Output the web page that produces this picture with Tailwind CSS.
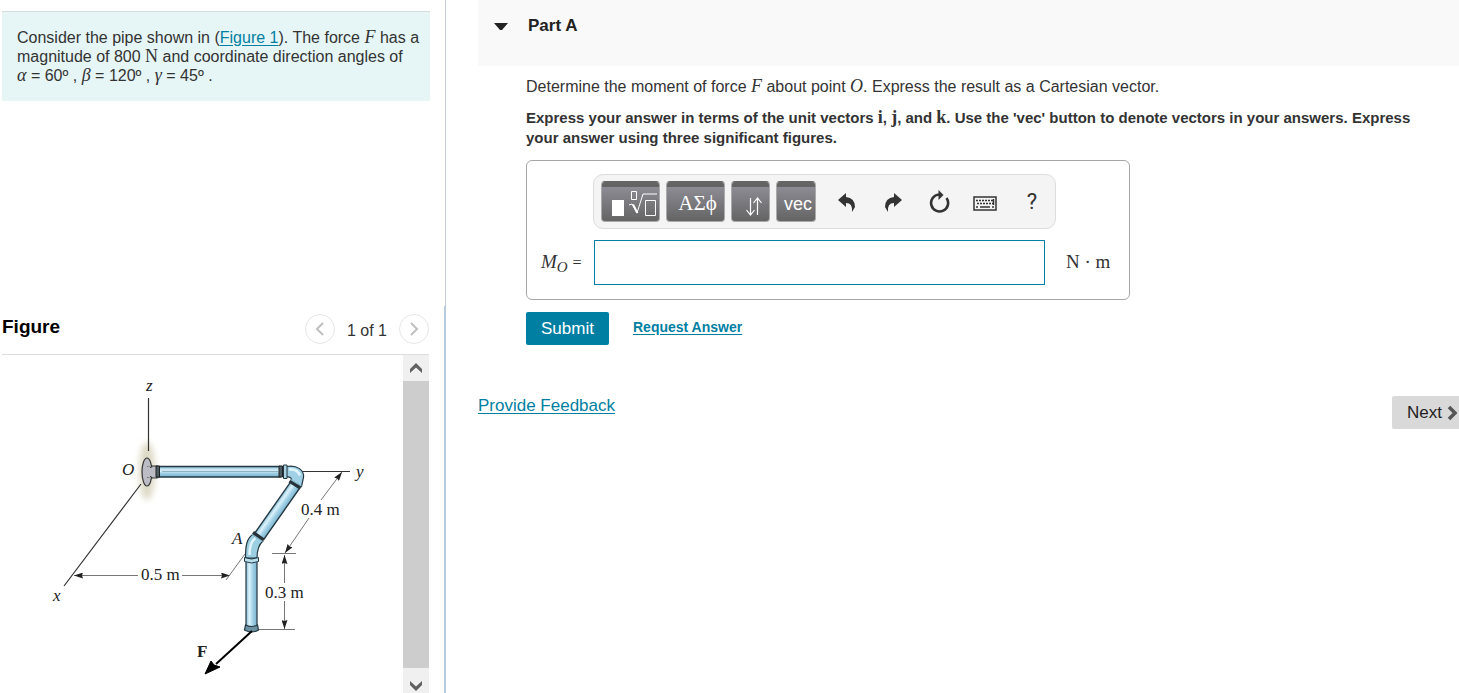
<!DOCTYPE html>
<html lang="en">
  <head>
    <meta charset="UTF-8" />
    <meta name="viewport" content="width=device-width, initial-scale=1.0" />
    <title>Moment of a Force</title>
    <script src="https://cdn.jsdelivr.net/npm/@tailwindcss/browser@4"></script>
  </head>
  <body class="bg-white font-['Liberation_Sans',Arial,sans-serif] text-[#333]">
    <div class="flex h-screen overflow-hidden">
      <!-- Problem statement and figure -->
      <aside class="flex w-[446px] shrink-0 flex-col">
        <div class="h-[306px] shrink-0 border-r border-[#c3ccd6] pt-[11px] pr-[15px] pl-[2px]">
          <div class="border-t border-[#d5dedd] bg-[#e6f6f6] py-4 pl-[15px] text-[16px] leading-[19px]">
            <p>
              Consider the pipe shown in (<a href="#figure" class="text-[#007fa3] underline underline-offset-2">Figure 1</a>). The force
              <i class="font-['Liberation_Serif',serif] text-[18px] leading-4">F</i> has a magnitude of 800
              <span class="font-['Liberation_Serif',serif] text-[18px] leading-4">N</span> and coordinate direction angles of<br />
              <i class="font-['Liberation_Serif',serif] text-[18px] leading-4">α</i> = 60º ,
              <i class="font-['Liberation_Serif',serif] text-[18px] leading-4">β</i> = 120º ,
              <i class="font-['Liberation_Serif',serif] text-[18px] leading-4">γ</i> = 45º .
            </p>
          </div>
        </div>

        <section id="figure" class="flex min-h-0 flex-1 flex-col border-r-2 border-[#b8cce0] pr-[15px] pl-[2px]">
          <div class="flex h-[49px] shrink-0 items-center justify-between border-b border-[#ddd]">
            <h2 class="pb-[6px] text-[19px] font-bold text-black">Figure</h2>
            <div class="flex items-center gap-3 pb-[2px]">
              <button aria-label="Previous figure" class="flex size-[30px] items-center justify-center rounded-full border border-[#e6e6e6]">
                <svg class="h-[14px] w-[10px]" viewBox="0 0 10 14" fill="none" stroke="#bfbfbf" stroke-width="2"><path d="M8 1 2 7l6 6" /></svg>
              </button>
              <span class="pt-1 text-[16px]">1 of 1</span>
              <button aria-label="Next figure" class="flex size-[30px] items-center justify-center rounded-full border border-[#e6e6e6]">
                <svg class="h-[14px] w-[10px]" viewBox="0 0 10 14" fill="none" stroke="#bfbfbf" stroke-width="2"><path d="m2 1 6 6-6 6" /></svg>
              </button>
            </div>
          </div>

          <div class="flex min-h-0 flex-1">
            <div class="min-w-0 flex-1 overflow-hidden">
              <svg class="h-[338px] w-[401px]" viewBox="2 355 401 338" font-family="Liberation Serif, serif" font-size="17" fill="#222">
                <defs>
                  <linearGradient id="pipeH" x1="0" y1="0" x2="0" y2="1">
                    <stop offset="0" stop-color="#7fb8d4" />
                    <stop offset=".25" stop-color="#c4e4f2" />
                    <stop offset=".45" stop-color="#d9eff8" />
                    <stop offset=".65" stop-color="#9dcfe5" />
                    <stop offset="1" stop-color="#7ab3ce" />
                  </linearGradient>
                  <linearGradient id="pipeV" x1="0" y1="0" x2="1" y2="0">
                    <stop offset="0" stop-color="#84bcd6" />
                    <stop offset=".3" stop-color="#dcf2fa" />
                    <stop offset=".6" stop-color="#a4d3e8" />
                    <stop offset="1" stop-color="#7ab3ce" />
                  </linearGradient>
                  <filter id="soft" x="-50%" y="-20%" width="200%" height="140%"><feGaussianBlur stdDeviation="3" /></filter>
                  <marker id="arrow" viewBox="0 0 9 6" refX="9" refY="3" markerWidth="9" markerHeight="6" markerUnits="userSpaceOnUse" orient="auto-start-reverse">
                    <path d="M0 0 9 3 0 6 1 3z" fill="#222" />
                  </marker>
                </defs>

                <!-- axes -->
                <ellipse cx="147" cy="471" rx="8" ry="29" fill="#dcd9c4" filter="url(#soft)" />
                <g stroke="#333" stroke-width="1.2">
                  <path d="M148.500 398v53M141 484 64 586M298 471.500h52" />
                </g>

                <!-- dimensions -->
                <g stroke="#777" stroke-width="1" fill="none">
                  <path d="M138 575.500H74" marker-end="url(#arrow)" />
                  <path d="M182 575.500h48" marker-end="url(#arrow)" />
                  <path d="m245 554-19 26M272 553.500h24M259 629.500h36" />
                  <path d="m321 500 21-28" marker-end="url(#arrow)" />
                  <path d="m309 518-24 35" marker-end="url(#arrow)" />
                  <path d="M284.500 583v-28" marker-end="url(#arrow)" />
                  <path d="M284.500 601v28" marker-end="url(#arrow)" />
                </g>

                <!-- wall flange -->
                <g stroke="#333" stroke-width="1.200" fill="#bcbcc4">
                  <ellipse cx="147" cy="472" rx="5" ry="14" />
                  <path d="M147 467q5 1 5-1h5v12h-5q0-2-5-1" />
                </g>
                <path d="M146 467v10h4v-10z" fill="#bcbcc4" />

                <!-- pipe from the elbow to A -->
                <path transform="rotate(35 277 511)" d="M271.500 479h11v63h-11z" fill="url(#pipeV)" stroke="#243842" stroke-width="1.400" />

                <!-- pipe along y -->
                <path d="M157 466.500h123v10.500H157z" fill="url(#pipeH)" stroke="#243842" stroke-width="1.400" />
                <path d="M162 471.500h116" stroke="#6d96a8" stroke-width=".7" />
                <path d="M156 466h3.500v11H156zM279 466h3.500v11H279z" fill="#4b5c64" stroke="#222" />
                <path d="M286.500 466.500c11-2 18 4 17 11l-2 9-10-5q1-5-5-4.500z" fill="#9fd0e5" stroke="#243842" stroke-width="1.200" />
                <path d="M289 469.500q8-1 11 6" stroke="#dff4fb" stroke-width="2.500" fill="none" />
                <path d="M283.500 465h3.500v13.500h-3.500z" fill="#a9d3e5" stroke="#243842" />
                <path d="m289.500 481 11 7" stroke="#263238" stroke-width="3.500" />
                <path d="m290.500 479.500 11 6.500" stroke="#88b8cc" stroke-width="1.200" />

                <!-- elbow and pipe below A -->
                <path d="M246 559h11v68h-11z" fill="url(#pipeV)" stroke="#243842" stroke-width="1.200" />
                <path d="M245.500 558c0-12 1-20 8-24l9.500 7q-6 5-6 17z" fill="#9dcfe3" stroke="#243842" stroke-width="1.200" />
                <path d="M249.500 555q0-13 6-17" stroke="#e1f5fc" stroke-width="2.500" fill="none" />
                <path d="m253 532.500 10.500 7.500" stroke="#263238" stroke-width="3.500" />
                <path d="m252 534.500 10.500 7" stroke="#88b8cc" stroke-width="1.200" />
                <path d="M244.500 557.500q7 3 14 0v4q-7 3-14 0z" fill="#b8dfee" stroke="#243842" />
                <path d="M245.500 625q6 3 12 0l1 5q-7 4-14 0z" fill="#6c91a2" stroke="#243842" stroke-width="1.200" />

                <!-- force -->
                <path d="m252 631-36 33" stroke="#000" stroke-width="2" />
                <path d="m205 674 6-13 3 4 6 2z" fill="#000" stroke="#000" />

                <g font-style="italic">
                  <text x="146" y="391">z</text>
                  <text x="122" y="475">O</text>
                  <text x="356" y="477">y</text>
                  <text x="232" y="544">A</text>
                  <text x="53" y="601">x</text>
                </g>
                <text x="301" y="515">0.4 m</text>
                <text x="141" y="580">0.5 m</text>
                <text x="265" y="598">0.3 m</text>
                <text x="197" y="657" font-weight="bold">F</text>
              </svg>
            </div>
            <!-- scroll bar -->
            <div class="flex w-[26px] shrink-0 flex-col bg-[#f0f0f0]">
              <button aria-label="Scroll up" class="flex h-[26px] items-center justify-center">
                <svg class="h-[10px] w-[14px]" viewBox="0 0 14 10"><path d="M7 0 13 6v4L7 4.500 1 10V6z" fill="#606060" /></svg>
              </button>
              <div class="flex-1 bg-[#cdcdcd]"></div>
              <button aria-label="Scroll down" class="flex h-[25px] items-end justify-center pb-[2px]">
                <svg class="h-[10px] w-[14px]" viewBox="0 0 14 10"><path d="M7 10 13 4V0L7 5.500 1 0v4z" fill="#606060" /></svg>
              </button>
            </div>
          </div>
        </section>
      </aside>

      <!-- Question -->
      <main class="min-w-0 flex-1 pl-8">
        <header class="flex h-[66px] items-start bg-[#f9f9f9] pt-[14px] pl-4">
          <button aria-label="Collapse Part A" class="flex h-6 w-[34px] items-center">
            <svg class="h-[7px] w-[14px]" viewBox="0 0 14 7"><path d="M0 0h14L8 7H6z" fill="#222" /></svg>
          </button>
          <h1 class="text-[17px] leading-6 font-bold text-[#222]">Part A</h1>
        </header>

        <div class="pt-[11px] pl-12">
          <p class="text-[16px] leading-5">
            Determine the moment of force <i class="font-['Liberation_Serif',serif] text-[18px] leading-4">F</i> about point
            <i class="font-['Liberation_Serif',serif] text-[18px] leading-4">O</i>. Express the result as a Cartesian vector.
          </p>
          <p class="mt-[11px] text-[15px] leading-5 font-bold">
            Express your answer in terms of the unit vectors
            <span class="font-['Liberation_Serif',serif] text-[18px] leading-4">i</span>,
            <span class="font-['Liberation_Serif',serif] text-[18px] leading-4">j</span>, and
            <span class="font-['Liberation_Serif',serif] text-[18px] leading-4">k</span>. Use the 'vec' button to denote vectors in your answers. Express<br />
            your answer using three significant figures.
          </p>

          <div class="mt-3 h-[140px] w-[604px] rounded-md border border-[#a6a6a6] pt-[13px] pl-[13px]">
            <div class="ml-[53px] flex h-[55px] w-[463px] items-center gap-[6px] rounded-[10px] border border-[#ddd] bg-[#f4f4f4] pl-[7px]">
              <button aria-label="Templates" class="h-[41px] w-[59px] rounded border border-[#aaa] border-t-[#666] bg-linear-to-b from-[#94929c] to-[#646464]">
                <span class="block h-[5px] rounded-t bg-[#646464]"></span>
                <svg class="h-[34px] w-[57px]" viewBox="0 0 57 34" fill="none" stroke="#fff">
                  <path d="M10 13h12v16H10z" fill="#fff" stroke="none" />
                  <path d="M29.500 4.500h5v8h-5zM27 18l3-1 5 9 6-19h14" />
                  <path d="M31 17.500 35.500 26" stroke-width="2" />
                  <path d="M43.500 13.500h10v15h-10z" />
                </svg>
              </button>
              <button aria-label="Symbols" class="h-[41px] w-[59px] rounded border border-[#aaa] border-t-[#666] bg-linear-to-b from-[#94929c] to-[#646464]">
                <span class="block h-[5px] rounded-t bg-[#646464]"></span>
                <span class="block h-[34px] pl-1 font-['Liberation_Serif',serif] text-[21px] leading-[32px] text-white">ΑΣϕ</span>
              </button>
              <button aria-label="Arrows" class="h-[41px] w-[39px] rounded border border-[#aaa] border-t-[#666] bg-linear-to-b from-[#94929c] to-[#646464]">
                <span class="block h-[5px] rounded-t bg-[#646464]"></span>
                <svg class="h-[34px] w-[37px]" viewBox="0 0 37 34" fill="none" stroke="#fff" stroke-width="1.200">
                  <path d="M18.500 11v16M14.500 23l4 5 4-5M25.500 28V12M21.500 16l4-5 4 5" />
                </svg>
              </button>
              <button class="h-[41px] w-[40px] rounded border border-[#aaa] border-t-[#666] bg-linear-to-b from-[#94929c] to-[#646464]">
                <span class="block h-[5px] rounded-t bg-[#646464]"></span>
                <span class="block h-[34px] pl-[7px] text-left text-[18px] leading-[35px] text-white">vec</span>
              </button>
              <div class="ml-[2px] flex">
                <button aria-label="Undo" class="flex h-10 w-[46px] items-center justify-center">
                  <svg class="h-[20px] w-[18px]" viewBox="0 0 18 20"><path d="M0 8 8 1v4q9 1 9 10l-3 5q1-9-6-9v4z" fill="#333" /></svg>
                </button>
                <button aria-label="Redo" class="flex h-10 w-[46px] items-center justify-center">
                  <svg class="h-[20px] w-[18px]" viewBox="0 0 18 20"><path d="M18 8 10 1v4q-9 1-9 10l3 5q-1-9 6-9v4z" fill="#333" /></svg>
                </button>
                <button aria-label="Reset" class="flex h-10 w-[46px] items-center justify-center">
                  <svg class="h-[24px] w-[22px]" viewBox="0 0 22 24"><path d="M18.500 8A8.500 8.500 0 1 1 11 4.500" fill="none" stroke="#333" stroke-width="2.600" /><path d="m10.500 0 5 5-5 5z" fill="#333" /></svg>
                </button>
                <button aria-label="Keyboard" class="flex h-10 w-[46px] items-center justify-center pt-1">
                  <svg class="h-[15px] w-[24px]" viewBox="0 0 24 15" fill="none" stroke="#333">
                    <path d="M1 1h22v13H1z" stroke-width="1.500" />
                    <path d="M3 4.500h17M4 7.500h16" stroke-width="1.500" stroke-dasharray="2 1" />
                    <path d="M3 11h2M7 11h10M19 11h2M20.500 3v6" stroke-width="1.500" />
                  </svg>
                </button>
                <button aria-label="Help" class="h-10 w-[46px] pl-[2px] font-[Roboto,sans-serif] text-[22px] leading-10">?</button>
              </div>
            </div>

            <div class="mt-[11px] flex items-center">
              <label for="answer" class="w-[54px] shrink-0 pl-px font-['Liberation_Serif',serif] text-[19px] whitespace-nowrap"><i>M<sub class="text-[15px]">O</sub></i> <span class="text-[16px]">=</span></label>
              <input id="answer" type="text" class="h-[45px] w-[451px] border border-[#007fa3] px-2 outline-none" />
              <span class="ml-[21px] font-['Liberation_Serif',serif] text-[19px]">N · m</span>
            </div>
          </div>

          <div class="mt-3 flex items-center gap-6">
            <button class="h-[33px] w-[83px] rounded-xs bg-[#007fa3] text-[17px] text-white">Submit</button>
            <a href="#" class="pb-[2px] text-[14px] font-bold text-[#007fa3] underline underline-offset-2">Request Answer</a>
          </div>
        </div>

        <div class="mt-[49px] flex items-start justify-between">
          <a href="#" class="text-[17px] leading-6 text-[#007fa3] underline underline-offset-2">Provide Feedback</a>
          <button class="mt-[2px] flex h-[33px] w-[67px] items-center gap-[5px] rounded-l-xs bg-[#d9d9d9] pl-[15px] text-[17px] text-[#222]">
            Next
            <svg class="h-[16px] w-[11px]" viewBox="0 0 11 16" fill="none" stroke="#555" stroke-width="3.500"><path d="m2 2 6 6-6 6" /></svg>
          </button>
        </div>
      </main>
    </div>
  </body>
</html>
